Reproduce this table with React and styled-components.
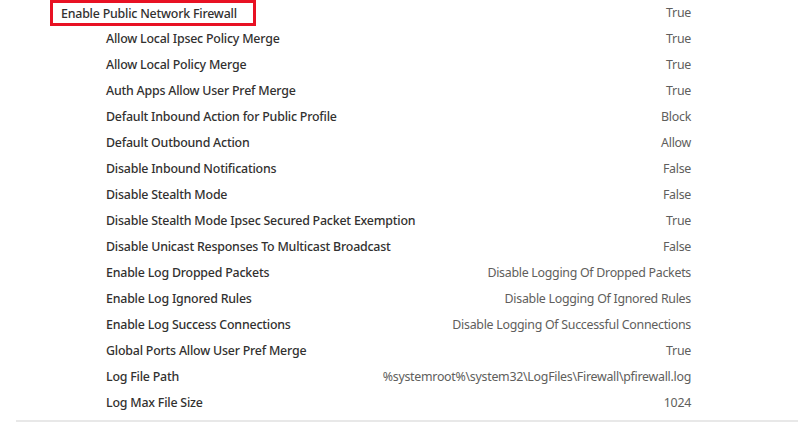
import React from 'react'
import styled, { createGlobalStyle } from 'styled-components'

const GlobalStyle = createGlobalStyle`
  html, body {
    margin: 0;
    padding: 0;
    background: #fff;
  }
  body {
    font-family: 'Noto Sans', 'Open Sans', sans-serif;
  }
`

const Panel = styled.div`
  width: 798px;
  height: 422px;
  overflow: hidden;
  display: flex;
  flex-direction: column;
`

const List = styled.div`
  display: flex;
  flex-direction: column;
  margin-top: -1px;
`

const Row = styled.div`
  display: grid;
  grid-template-columns: 1fr auto;
  align-items: center;
  height: 26px;
  padding-left: ${(p) => (p.$child ? '106px' : '50px')};
  padding-right: 107px;
`

const Label = styled.div`
  font-size: 12.4px;
  font-weight: 500;
  color: #323130;
  white-space: nowrap;
  letter-spacing: -0.21px;
`

const HighlightLabel = styled(Label)`
  justify-self: start;
  box-sizing: border-box;
  width: 206px;
  height: 26px;
  margin-top: 1px;
  display: flex;
  align-items: center;
  padding-left: 8px;
  border: 3px solid #e81123;
`

const Value = styled.div`
  font-size: 12.4px;
  color: #605e5c;
  white-space: nowrap;
  text-align: right;
  letter-spacing: -0.28px;
`

const Divider = styled.div`
  margin-top: auto;
  margin-left: 16px;
  height: 2px;
  background: #e8e8e8;
`

const settings = [
  ['Allow Local Ipsec Policy Merge', 'True'],
  ['Allow Local Policy Merge', 'True'],
  ['Auth Apps Allow User Pref Merge', 'True'],
  ['Default Inbound Action for Public Profile', 'Block'],
  ['Default Outbound Action', 'Allow'],
  ['Disable Inbound Notifications', 'False'],
  ['Disable Stealth Mode', 'False'],
  ['Disable Stealth Mode Ipsec Secured Packet Exemption', 'True'],
  ['Disable Unicast Responses To Multicast Broadcast', 'False'],
  ['Enable Log Dropped Packets', 'Disable Logging Of Dropped Packets'],
  ['Enable Log Ignored Rules', 'Disable Logging Of Ignored Rules'],
  ['Enable Log Success Connections', 'Disable Logging Of Successful Connections'],
  ['Global Ports Allow User Pref Merge', 'True'],
  ['Log File Path', '%systemroot%\\system32\\LogFiles\\Firewall\\pfirewall.log'],
  ['Log Max File Size', '1024'],
]

const App = () => (
  <>
    <GlobalStyle />
    <Panel>
      <List>
        <Row>
          <HighlightLabel>Enable Public Network Firewall</HighlightLabel>
          <Value>True</Value>
        </Row>
        {settings.map(([label, value]) => (
          <Row key={label} $child>
            <Label>{label}</Label>
            <Value>{value}</Value>
          </Row>
        ))}
      </List>
      <Divider />
    </Panel>
  </>
)

export default App
